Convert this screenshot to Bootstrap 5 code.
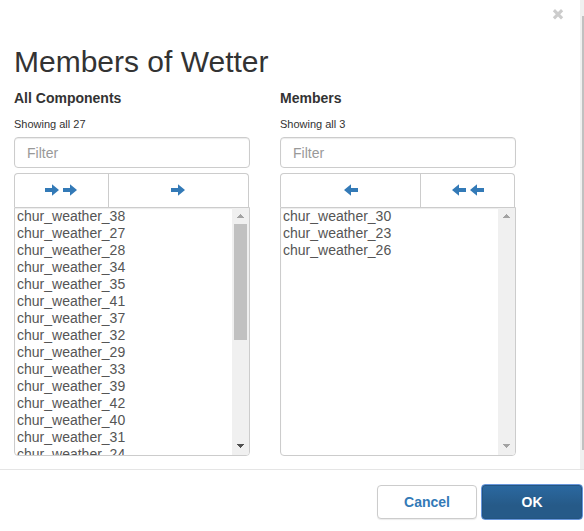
<!DOCTYPE html>
<html lang="en">
<head>
<meta charset="utf-8">
<meta name="viewport" content="width=device-width, initial-scale=1">
<title>Members of Wetter</title>
<link href="https://cdn.jsdelivr.net/npm/bootstrap@5.3.0/dist/css/bootstrap.min.css" rel="stylesheet">
<style>
  body { font-family: "Liberation Sans", Arial, sans-serif; font-size: 14px; line-height: 20px; color: #333; background: #fff; }
  svg { display: block; fill: currentColor; }
  .dialog-main { border-bottom: 1px solid #e5e5e5; }
  .dialog-content { padding: 8px 64px 13px 14px; }
  .close-btn { color: #ccc; margin-right: -48px; }
  h1 { font-size: 30px; line-height: 34px; font-weight: 400; margin: 25px 0 9px; }
  .lists { gap: 30px; }
  .lists > section { flex: 1 1 0; min-width: 0; }
  h2 { font-size: 14px; line-height: 20px; font-weight: 700; margin: 0 0 7px; }
  .count { font-size: 11px; line-height: 18px; margin: 0 0 4px; }
  .filter { font-size: 14px; line-height: 19px; padding: 6px 12px 4px; border-color: #ccc; border-radius: 4px; color: #555; box-shadow: inset 0 1px 1px rgba(0,0,0,.08); }
  .filter::placeholder { color: #999; }
  .moves { margin: 5px 1px 0 0; }
  .moves .btn { height: 34px; border: 1px solid #ccc; border-bottom: 0; border-radius: 4px; color: #337ab7; background: #fff; padding: 0 0 2px; gap: 4px; }
  .moves .one { flex: 3 1 0; }
  .moves .all { flex: 2 1 0; }
  .picker { height: 249px; border: 1px solid #ccc; border-radius: 0 0 4px 4px; box-shadow: inset 0 1px 1px rgba(0,0,0,.08); overflow: hidden; }
  .picker select { border: 0; padding: 0; margin: 0; background: transparent; color: #555; font-size: 14px; outline: 0; min-width: 0; overflow: hidden; scrollbar-width: none; }
  .picker option { padding: 0 2px; min-height: 17px; height: 17px; line-height: 15px; }
  .track { width: 17px; background: #f0f0f0; color: #a3a3a3; padding: 6px 2px 7px; }
  .thumb { height: 116px; background: #c1c1c1; margin-top: 6px; }
  .arrow-dark { color: #505050; }
  .page-track { width: 4px; background: #f0f0f0; padding: 16px 0 19px 2px; }
  .page-thumb { background: #c1c1c1; }
  .dialog-foot { padding: 14px 1px 11px; gap: 4px; }
  .dialog-foot .btn { font-size: 14px; line-height: 20px; font-weight: 700; border-radius: 4px; }
  .cancel { width: 100px; height: 34px; padding: 0; color: #337ab7; background: #fff; border: 1px solid #ccc; box-shadow: 0 1px 1px rgba(0,0,0,.08); }
  .ok { width: 102px; height: 36px; padding: 0; color: #fff; border: 1px solid #6796dc; background: linear-gradient(#2b69a1, #265a88 60%); box-shadow: inset 0 0 0 1px #245580; }
</style>
<script src="https://cdn.jsdelivr.net/npm/bootstrap@5.3.0/dist/js/bootstrap.bundle.min.js"></script>
</head>
<body>
<svg class="d-none" aria-hidden="true">
  <symbol id="right" viewBox="0 0 14 12"><path d="M0 4h7V.3L14 6l-7 5.7V8H0z"/></symbol>
  <symbol id="left" viewBox="0 0 14 12"><path d="M14 4H7V.3L0 6l7 5.7V8h7z"/></symbol>
  <symbol id="up" viewBox="0 0 7 4"><path d="M0 4V3h1V2h1V1h1V0h1v1h1v1h1v1h1v1z"/></symbol>
  <symbol id="down" viewBox="0 0 7 4"><path d="M0 0v1h1v1h1v1h1v1h1V3h1V2h1V1h1V0z"/></symbol>
</svg>
<div role="dialog" aria-labelledby="title">
  <div class="dialog-main d-flex">
    <main class="dialog-content flex-grow-1">
      <div class="d-flex justify-content-end">
        <button type="button" class="close-btn btn p-0 border-0" aria-label="Close"><svg width="12" height="12" viewBox="0 0 12 12"><path d="M3 1 6 4 9 1 11.200 3.200 8.200 6.200 11.200 9.200 9 11.400 6 8.400 3 11.400.8 9.200 3.800 6.200.8 3.200z"/></svg></button>
      </div>
      <h1 id="title">Members of Wetter</h1>
      <div class="lists d-flex">
        <section>
          <h2>All Components</h2>
          <p class="count">Showing all 27</p>
          <input class="filter form-control" type="text" placeholder="Filter" aria-label="Filter all components">
          <div class="moves btn-group d-flex">
            <button type="button" class="all btn d-flex align-items-center justify-content-center rounded-bottom-0" aria-label="Move all"><svg width="14" height="12"><use href="#right"/></svg><svg width="14" height="12"><use href="#right"/></svg></button>
            <button type="button" class="one btn d-flex align-items-center justify-content-center rounded-bottom-0" aria-label="Move selected"><svg width="14" height="12"><use href="#right"/></svg></button>
          </div>
          <div class="picker d-flex">
            <select multiple class="flex-grow-1" aria-label="All Components">
              <option>chur_weather_38</option><option>chur_weather_27</option><option>chur_weather_28</option>
              <option>chur_weather_34</option><option>chur_weather_35</option><option>chur_weather_41</option>
              <option>chur_weather_37</option><option>chur_weather_32</option><option>chur_weather_29</option>
              <option>chur_weather_33</option><option>chur_weather_39</option><option>chur_weather_42</option>
              <option>chur_weather_40</option><option>chur_weather_31</option><option>chur_weather_24</option>
            </select>
            <div class="track d-flex flex-column" aria-hidden="true">
              <svg class="align-self-center" width="7" height="4"><use href="#up"/></svg>
              <div class="thumb"></div>
              <svg class="arrow-dark align-self-center mt-auto" width="7" height="4"><use href="#down"/></svg>
            </div>
          </div>
        </section>
        <section>
          <h2>Members</h2>
          <p class="count">Showing all 3</p>
          <input class="filter form-control" type="text" placeholder="Filter" aria-label="Filter members">
          <div class="moves btn-group d-flex">
            <button type="button" class="one btn d-flex align-items-center justify-content-center rounded-bottom-0" aria-label="Remove selected"><svg width="14" height="12"><use href="#left"/></svg></button>
            <button type="button" class="all btn d-flex align-items-center justify-content-center rounded-bottom-0" aria-label="Remove all"><svg width="14" height="12"><use href="#left"/></svg><svg width="14" height="12"><use href="#left"/></svg></button>
          </div>
          <div class="picker d-flex">
            <select multiple class="flex-grow-1" aria-label="Members">
              <option>chur_weather_30</option><option>chur_weather_23</option><option>chur_weather_26</option>
            </select>
            <div class="track d-flex flex-column" aria-hidden="true">
              <svg class="align-self-center" width="7" height="4"><use href="#up"/></svg>
              <svg class="align-self-center mt-auto" width="7" height="4"><use href="#down"/></svg>
            </div>
          </div>
        </section>
      </div>
    </main>
    <div class="page-track d-flex" aria-hidden="true"><div class="page-thumb flex-grow-1"></div></div>
  </div>
  <footer class="dialog-foot d-flex justify-content-end align-items-center">
    <button type="button" class="cancel btn">Cancel</button>
    <button type="button" class="ok btn">OK</button>
  </footer>
</div>
</body>
</html>
